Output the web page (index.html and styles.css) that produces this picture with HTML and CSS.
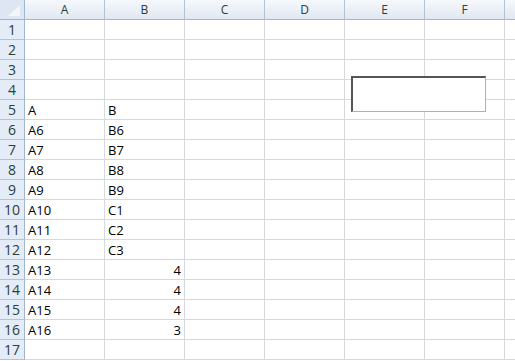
FILE: index.html
```html
<!DOCTYPE html>
<html lang="en">
<head>
  <meta charset="UTF-8">
  <title>Sheet1</title>
  <link rel="stylesheet" href="styles.css">
</head>
<body>
  <div class="sheet">
    <div class="grid">
      <div class="corner"><svg width="24" height="19" viewBox="0 0 24 19"><polygon points="20,5 20,16 8,16" fill="#f4f6f9"/></svg></div>
      <div class="colhead">A</div><div class="colhead">B</div><div class="colhead">C</div><div class="colhead">D</div><div class="colhead">E</div><div class="colhead">F</div><div class="colhead">&nbsp;</div>

      <div class="rowhead">1</div><div class="cell"></div><div class="cell"></div><div class="cell"></div><div class="cell"></div><div class="cell"></div><div class="cell"></div><div class="cell"></div>
      <div class="rowhead">2</div><div class="cell"></div><div class="cell"></div><div class="cell"></div><div class="cell"></div><div class="cell"></div><div class="cell"></div><div class="cell"></div>
      <div class="rowhead">3</div><div class="cell"></div><div class="cell"></div><div class="cell"></div><div class="cell"></div><div class="cell"></div><div class="cell"></div><div class="cell"></div>
      <div class="rowhead">4</div><div class="cell"></div><div class="cell"></div><div class="cell"></div><div class="cell"></div><div class="cell"></div><div class="cell"></div><div class="cell"></div>
      <div class="rowhead">5</div><div class="cell">A</div><div class="cell">B</div><div class="cell"></div><div class="cell"></div><div class="cell"></div><div class="cell"></div><div class="cell"></div>
      <div class="rowhead">6</div><div class="cell">A6</div><div class="cell">B6</div><div class="cell"></div><div class="cell"></div><div class="cell"></div><div class="cell"></div><div class="cell"></div>
      <div class="rowhead">7</div><div class="cell">A7</div><div class="cell">B7</div><div class="cell"></div><div class="cell"></div><div class="cell"></div><div class="cell"></div><div class="cell"></div>
      <div class="rowhead">8</div><div class="cell">A8</div><div class="cell">B8</div><div class="cell"></div><div class="cell"></div><div class="cell"></div><div class="cell"></div><div class="cell"></div>
      <div class="rowhead">9</div><div class="cell">A9</div><div class="cell">B9</div><div class="cell"></div><div class="cell"></div><div class="cell"></div><div class="cell"></div><div class="cell"></div>
      <div class="rowhead">10</div><div class="cell">A10</div><div class="cell">C1</div><div class="cell"></div><div class="cell"></div><div class="cell"></div><div class="cell"></div><div class="cell"></div>
      <div class="rowhead">11</div><div class="cell">A11</div><div class="cell">C2</div><div class="cell"></div><div class="cell"></div><div class="cell"></div><div class="cell"></div><div class="cell"></div>
      <div class="rowhead">12</div><div class="cell">A12</div><div class="cell">C3</div><div class="cell"></div><div class="cell"></div><div class="cell"></div><div class="cell"></div><div class="cell"></div>
      <div class="rowhead">13</div><div class="cell">A13</div><div class="cell num">4</div><div class="cell"></div><div class="cell"></div><div class="cell"></div><div class="cell"></div><div class="cell"></div>
      <div class="rowhead">14</div><div class="cell">A14</div><div class="cell num">4</div><div class="cell"></div><div class="cell"></div><div class="cell"></div><div class="cell"></div><div class="cell"></div>
      <div class="rowhead">15</div><div class="cell">A15</div><div class="cell num">4</div><div class="cell"></div><div class="cell"></div><div class="cell"></div><div class="cell"></div><div class="cell"></div>
      <div class="rowhead">16</div><div class="cell">A16</div><div class="cell num">3</div><div class="cell"></div><div class="cell"></div><div class="cell"></div><div class="cell"></div><div class="cell"></div>
      <div class="rowhead">17</div><div class="cell"></div><div class="cell"></div><div class="cell"></div><div class="cell"></div><div class="cell"></div><div class="cell"></div><div class="cell"></div>
    </div>
    <div class="textbox"></div>
  </div>
</body>
</html>
```

FILE: styles.css
```css
html, body { margin: 0; padding: 0; background: #fff; overflow: hidden; }
body { font-family: "Open Sans", "Liberation Sans", sans-serif; font-size: 13px; color: #000; }
.sheet { position: relative; width: 515px; height: 361px; overflow: hidden; }
.grid { display: grid; grid-template-columns: 25px repeat(7, 80px); grid-auto-rows: 20px; }
.grid > div { box-sizing: border-box; border-right: 1px solid #d6d9de; border-bottom: 1px solid #d6d9de; white-space: nowrap; overflow: hidden; line-height: 20px; }
.corner { background: #dde6f2; border-color: #9eb6ce !important; }
.corner svg { display: block; }
.colhead { background: linear-gradient(#f5f8fc, #e2e8f1); border-right-color: #b1c3d8 !important; border-bottom-color: #9eb6ce !important; color: #27413e; text-align: center; font-size: 12px; line-height: 20px; }
.rowhead { background: #e4ecf7; border-right-color: #9eb6ce !important; border-bottom-color: #b1c3d8 !important; color: #27413e; text-align: center; font-size: 14px; }
.cell { padding: 0 3px; line-height: 21px !important; }
.num { text-align: right; }
.textbox { position: absolute; left: 351px; top: 76px; width: 132px; height: 33px; background: #fff; border-top: 2px solid #555; border-left: 2px solid #555; border-right: 1px solid #b0b0b0; border-bottom: 1px solid #b0b0b0; }
```
